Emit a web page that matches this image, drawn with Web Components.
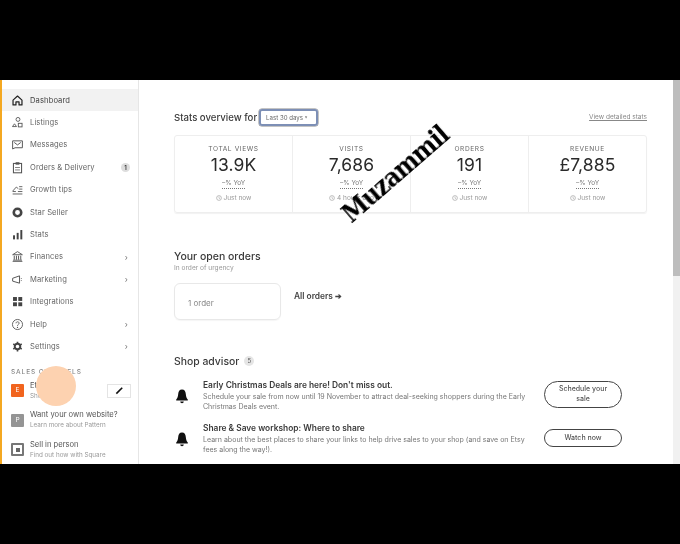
<!DOCTYPE html>
<html lang="en"><head><meta charset="utf-8"><title>Dashboard</title>
<style>
html,body{margin:0;padding:0;background:#000;width:680px;height:544px;overflow:hidden;font-family:Inter,"Liberation Sans",sans-serif}
</style></head><body>
<shop-frame>
  <shop-sidebar slot="side">
    <nav-row icon="home" active>Dashboard</nav-row>
    <nav-row icon="listings">Listings</nav-row>
    <nav-row icon="mail">Messages</nav-row>
    <nav-row icon="clip" badge="1">Orders &amp; Delivery</nav-row>
    <nav-row icon="growth">Growth tips</nav-row>
    <nav-row icon="star">Star Seller</nav-row>
    <nav-row icon="bars">Stats</nav-row>
    <nav-row icon="bank" arrow>Finances</nav-row>
    <nav-row icon="horn" arrow>Marketing</nav-row>
    <nav-row icon="grid">Integrations</nav-row>
    <nav-row icon="help" arrow>Help</nav-row>
    <nav-row icon="gear" arrow>Settings</nav-row>
    <sales-channels></sales-channels>
  </shop-sidebar>
  <shop-main slot="main"></shop-main>
</shop-frame>
<script>
const ICONS={
home:'<path d="M2.5 7.5 8 2.5l5.5 5v6h-3.6V9.8H6.1v3.7H2.5z" fill="none" stroke="#222" stroke-width="1.5" stroke-linejoin="round"/>',
listings:'<circle cx="8.6" cy="4.2" r="2.4" fill="none" stroke="#555" stroke-width="1.1"/><rect x="9" y="9" width="4.6" height="4.4" fill="none" stroke="#555" stroke-width="1.1"/><path d="M1.8 13 4.3 9.6 6.8 13z" fill="none" stroke="#555" stroke-width="1.1"/>',
mail:'<path d="M2 3.5h12v8.5H5l-3 1.5z" fill="none" stroke="#555" stroke-width="1.2"/><path d="m4 5.5 4 3 4-3" fill="none" stroke="#555" stroke-width="1.2"/>',
clip:'<rect x="3" y="3" width="10" height="11.5" fill="none" stroke="#555" stroke-width="1.3"/><rect x="5.7" y="1.5" width="4.6" height="3" fill="#555"/><path d="M5 8h6M5 11h6" stroke="#666" stroke-width="1"/>',
growth:'<path d="M2 13.5h12M2 10.5h4M8.5 10.5H14M2 10 6.5 5 9 7" fill="none" stroke="#555" stroke-width="1.1"/><path d="M10 4.5h4M10 7.5h4" stroke="#555" stroke-width="1.1"/>',
star:'<circle cx="8" cy="8" r="4.6" fill="none" stroke="#444" stroke-width="3.2"/>',
bars:'<rect x="2.5" y="9" width="2.4" height="5" fill="#444"/><rect x="7" y="6" width="2.4" height="8" fill="#444"/><rect x="11.5" y="2.5" width="2.4" height="11.5" fill="#444"/>',
bank:'<path d="M2 5.8 8 2l6 3.8zM2 14h12M2.5 12.5h11" fill="none" stroke="#555" stroke-width="1.1"/><path d="M4 7v5M6.7 7v5M9.3 7v5M12 7v5" stroke="#555" stroke-width="1.2"/>',
horn:'<path d="M2 6.5 10.5 3.5v9L2 10z" fill="none" stroke="#555" stroke-width="1.2"/><path d="M12.7 6.2v.9M12.7 9v.9" stroke="#555" stroke-width="1.2"/>',
grid:'<rect x="2.5" y="2.5" width="4.8" height="4.8" fill="#444"/><rect x="9" y="2.5" width="4.8" height="4.8" fill="#444"/><rect x="2.5" y="9" width="4.8" height="4.8" fill="#444"/><rect x="9" y="9" width="4.8" height="4.8" fill="#444"/>',
help:'<circle cx="8" cy="8" r="6.2" fill="none" stroke="#555" stroke-width="1.1"/><path d="M6.2 6.5C6.2 4 10 4.2 10 6.4 10 8 8 7.8 8 9.6" fill="none" stroke="#555" stroke-width="1.1"/><circle cx="8" cy="11.6" r=".8" fill="#555"/>',
gear:'<circle cx="8" cy="8" r="3.4" fill="none" stroke="#444" stroke-width="2.4"/><path d="M8 2v2M8 12v2M2.8 5l1.7 1M11.5 10l1.7 1M2.8 11l1.7-1M11.5 6l1.7-1" stroke="#444" stroke-width="2"/>'
};
function def(name,html,Base){
  const tpl=document.createElement('template');tpl.innerHTML=html;
  customElements.define(name,class extends HTMLElement{
    constructor(){super();this.attachShadow({mode:'open'}).appendChild(tpl.content.cloneNode(true));}
    connectedCallback(){if(Base)Base.call(this,this.shadowRoot);}
  });
}
def('shop-frame',`<style>
:host{display:flex;flex-direction:column;width:680px;height:544px;background:#000;position:relative}
.body{margin-top:80px;height:384px;display:flex;background:#fff;overflow:hidden;filter:blur(.45px)}
.bar{width:7px;flex:none;background:#f1f1f1}
.bar i{display:block;height:196px;background:#bdbdbd}
.wm{position:absolute;left:395px;top:174px;transform:translate(-50%,-50%) rotate(-41deg);font:700 26px "DejaVu Serif",serif;font-stretch:condensed;color:#000;white-space:nowrap;letter-spacing:-.9px;filter:blur(.3px)}
</style><div class="body"><slot name="side"></slot><slot name="main"></slot><div class="bar"><i></i></div></div><div class="wm">Muzammil</div>`);
def('shop-sidebar',`<style>
:host{display:block;width:139px;flex:none;height:384px;box-sizing:border-box;border-left:2px solid #f4a821;border-right:1px solid #e6e6e6;padding-top:9px;position:relative;overflow:hidden;background:#fff}
</style><slot></slot>`);
def('nav-row',`<style>
:host{display:flex;align-items:center;height:22.4px;color:#666;font-size:7.6px;letter-spacing:.1px;box-sizing:border-box;padding-left:9px;padding-right:8px}
:host([active]){background:#f2f2f2;color:#444}
svg{width:13px;height:13px;flex:none;margin-right:6px}
.t{flex:1;white-space:nowrap}
.b{width:9px;height:9px;border-radius:50%;background:#ddd;font-size:6px;text-align:center;line-height:9px;color:#333;font-weight:600}
.a{font-size:8px;color:#777;margin-right:2px}
</style><svg viewBox="0 0 16 16"></svg><span class="t"><slot></slot></span><span class="x"></span>`,function(r){
  r.querySelector('svg').innerHTML=ICONS[this.getAttribute('icon')];
  const x=r.querySelector('.x');
  if(this.hasAttribute('badge')){x.className='b';x.textContent=this.getAttribute('badge');}
  else if(this.hasAttribute('arrow')){x.className='a';x.textContent='›';}
});
def('sales-channels',`<style>
:host{display:block;position:relative;color:#555}
.h{font-size:6.5px;letter-spacing:.9px;color:#888;font-weight:500;padding:10px 0 0 9px;line-height:9px;height:8.5px}
.r{display:flex;align-items:center;padding-left:9px;height:29.5px;position:relative}
.ic{width:13px;height:13px;flex:none;margin-right:6px;color:#fff;font-size:6.5px;text-align:center;line-height:13px;border-radius:1px}
.o{background:#f1641e}.g{background:#949494}
.sq{box-sizing:border-box;border:2px solid #777;background:#fff;display:flex;align-items:center;justify-content:center}
.sq i{width:4px;height:4px;background:#666;display:block}
.t{font-size:7.6px;line-height:10px;color:#555;white-space:nowrap}
.s{font-size:6.3px;line-height:10px;color:#999;white-space:nowrap}
.pen{position:absolute;left:105px;top:7.5px;width:24px;height:14px;border:1px solid #e4e4e4;box-sizing:border-box;display:flex;align-items:center;justify-content:center;background:#fff}
.pen svg{width:9px;height:9px}
.dot{position:absolute;left:34px;top:8px;width:40px;height:40px;border-radius:50%;background:#fdd2b0}
</style>
<div class="h">SALES CHANNELS</div>
<div class="r"><div class="ic o">E</div><div><div class="t">Etsy</div><div class="s">Shop</div></div><div class="pen"><svg viewBox="0 0 10 10"><path d="M1.5 8.5 8 2" stroke="#111" stroke-width="1.8"/></svg></div></div>
<div class="r"><div class="ic g">P</div><div><div class="t">Want your own website?</div><div class="s">Learn more about Pattern</div></div></div>
<div class="r"><div class="ic sq"><i></i></div><div><div class="t">Sell in person</div><div class="s">Find out how with Square</div></div></div>
<div class="dot"></div>`);
def('stat-cell',`<style>
:host{display:flex;flex-direction:column;align-items:center;flex:1;border-left:1px solid #eee;color:#222}
:host(:first-child){border-left:0}
.l{font-size:6.6px;letter-spacing:.6px;color:#666;margin-top:9px;line-height:9px}
.n{font-size:17.5px;line-height:20px;margin-top:1px;color:#2a2a2a;letter-spacing:.1px}
.y{font-size:6.5px;line-height:8px;color:#777;margin-top:4px;border-bottom:1px dotted #777;padding-bottom:1px}
.j{font-size:6.5px;line-height:8px;color:#999;margin-top:5px;display:flex;align-items:center;gap:2px;white-space:nowrap}
svg{width:6px;height:6px}
</style><div class="l"></div><div class="n"></div><div class="y">–% YoY</div><div class="j"><svg viewBox="0 0 8 8"><circle cx="4" cy="4" r="3.2" fill="none" stroke="#999" stroke-width=".8"/><path d="M4 2v2.2l1.4.8" fill="none" stroke="#999" stroke-width=".7"/></svg><span></span></div>`,function(r){
  r.querySelector('.l').textContent=this.getAttribute('label');
  r.querySelector('.n').textContent=this.getAttribute('value');
  r.querySelector('span').textContent=this.getAttribute('when')||'Just now';
});
def('advisor-item',`<style>
:host{display:flex;align-items:center;height:var(--h,44px);color:#333}
svg{width:14px;height:16px;margin:0 14px 0 1px;flex:none}
.m{flex:1;min-width:0}
.t{font-size:8.4px;line-height:11px;font-weight:600;color:#3a3a3a;white-space:nowrap}
.d{font-size:7.02px;line-height:10.5px;color:#777;margin-top:1px;width:335px}
.btn{flex:none;width:78px;box-sizing:border-box;border:1.5px solid #444;border-radius:15px;font-size:7px;line-height:10px;font-weight:500;text-align:center;color:#555;padding:var(--bp,3.5px) 10px;margin:0 25px var(--bm,0) 0}
</style><svg viewBox="0 0 14 16"><path d="M7 1.5C4.4 1.5 3.4 3.6 3.2 6c-.2 2.6-.8 4-2 5.6v1h11.6v-1c-1.2-1.6-1.8-3-2-5.6C10.6 3.6 9.6 1.5 7 1.5z" fill="#111"/><path d="M5.2 13.4h3.6a1.8 1.8 0 0 1-3.6 0z" fill="#111"/></svg><div class="m"><div class="t"><slot name="title"></slot></div><div class="d"><slot></slot></div></div><div class="btn"><slot name="btn"></slot></div>`);
def('shop-main',`<style>
:host{display:block;flex:1;min-width:0;padding:0 26px 0 35px;height:384px;overflow:hidden;color:#333;background:#fff}
.top{display:flex;align-items:center;height:18px;margin-top:28px}
h2{margin:0;font-weight:500;color:#3a3a3a;white-space:nowrap}
.top h2{font-size:9.6px}
.sel{width:59px;height:17px;box-sizing:border-box;border:2px solid #7d8fb5;border-radius:3px;margin-left:2px;font-size:6.1px;line-height:13px;padding-left:5px;color:#666;box-shadow:0 0 0 .5px #8a8a8a}
.lnk{margin-left:auto;font-size:6.5px;color:#888;text-decoration:underline;white-space:nowrap}
.cards{display:flex;height:78px;margin-top:9px;border:1px solid #eee;border-radius:3px;box-sizing:border-box;box-shadow:0 1px 1px #f2f2f2}
.o{margin-top:35.5px}
.o h2{font-size:10.5px;line-height:15px}
.sub{font-size:6.6px;line-height:9px;color:#999}
.row{display:flex;align-items:center;margin-top:10.5px}
.card{width:107px;height:37px;border:1px solid #e8e8e8;border-radius:6px;box-sizing:border-box;font-size:8px;line-height:38px;padding-left:13px;color:#888;box-shadow:0 1px 1px #f6f6f6}
.all{font-size:8.4px;font-weight:600;color:#444;margin:-12px 0 0 13px;white-space:nowrap}
.s{margin-top:33.5px;display:flex;align-items:center;gap:5px;height:15px}
.s h2{font-size:10.4px}
.bd{width:10px;height:10px;border-radius:50%;background:#e5e5e5;font-size:6px;line-height:10px;text-align:center;color:#555}
.items{margin-top:7px}
</style>
<div class="top"><h2>Stats overview for</h2><div class="sel">Last 30 days ˅</div><span class="lnk">View detailed stats</span></div>
<div class="cards"><stat-cell label="TOTAL VIEWS" value="13.9K"></stat-cell><stat-cell label="VISITS" value="7,686" when="4 hours ago"></stat-cell><stat-cell label="ORDERS" value="191"></stat-cell><stat-cell label="REVENUE" value="£7,885"></stat-cell></div>
<div class="o"><h2>Your open orders</h2><div class="sub">In order of urgency</div>
<div class="row"><div class="card">1 order</div><div class="all">All orders ➔</div></div></div>
<div class="s"><h2>Shop advisor</h2><span class="bd">5</span></div>
<div class="items">
<advisor-item style="--h:41px;--bp:2.5px;--bm:4px"><span slot="title">Early Christmas Deals are here! Don't miss out.</span>Schedule your sale from now until 19 November to attract deal-seeking shoppers during the Early Christmas Deals event.<span slot="btn">Schedule your sale</span></advisor-item>
<advisor-item style="--h:45px;--bp:3px;--bm:3px"><span slot="title">Share &amp; Save workshop: Where to share</span>Learn about the best places to share your links to help drive sales to your shop (and save on Etsy fees along the way!).<span slot="btn">Watch now</span></advisor-item>
</div>`);
</script>
</body></html>
